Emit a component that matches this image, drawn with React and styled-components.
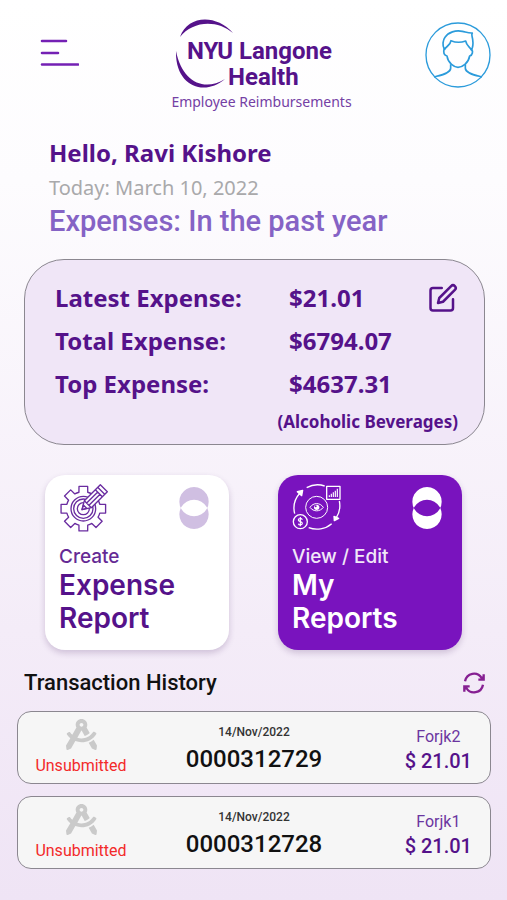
import styled, { createGlobalStyle } from "styled-components";
import { FiEdit } from "react-icons/fi";
import { FaDraftingCompass } from "react-icons/fa";

const GlobalStyle = createGlobalStyle`
  * {
    box-sizing: border-box;
  }

  body {
    margin: 0;
    font-family: "Noto Sans", "Open Sans", sans-serif;
    color: #55128a;
  }

  h1, h2, p, dl, dt, dd, ul {
    margin: 0;
    padding: 0;
    font-weight: inherit;
  }
`;

const Page = styled.div`
  min-height: 100vh;
  padding-bottom: 24px;
  background: linear-gradient(180deg, #ffffff 0%, #fdfcfe 20%, #f4ecf8 70%, #efe4f5 100%);
`;

const Header = styled.header`
  display: grid;
  grid-template-columns: 1fr auto 1fr;
  padding: 18px 16px 0 32px;
`;

const IconButton = styled.button`
  display: flex;
  border: none;
  background: none;
  padding: 0;
  color: inherit;
  cursor: pointer;
`;

const MenuButton = styled(IconButton)`
  align-self: start;
  justify-self: start;
  padding: 20px 8px;
`;

const AvatarButton = styled(IconButton)`
  align-self: start;
  justify-self: end;
  padding-top: 4px;
`;

const Brand = styled.div`
  display: flex;
  flex-direction: column;
  align-items: center;
`;

const LogoText = styled.text`
  font-family: Roboto, sans-serif;
  font-size: 24px;
  font-weight: 700;
`;

const BrandCaption = styled.p`
  font-size: 14px;
  line-height: 20px;
  color: #7440a4;
`;

const Intro = styled.section`
  padding: 24px 24px 0 49px;
`;

const Greeting = styled.h1`
  font-size: 24px;
  line-height: 34px;
  font-weight: 700;
`;

const Today = styled.p`
  margin-top: 2px;
  font-size: 20px;
  line-height: 32px;
  font-weight: 400;
  color: #a9a9ab;
`;

const Period = styled.h2`
  font-family: Roboto, sans-serif;
  font-size: 29px;
  line-height: 34px;
  font-weight: 500;
  color: #8563c5;
`;

const Summary = styled.section`
  display: flex;
  justify-content: space-between;
  align-items: flex-start;
  margin: 21px 22px 0 24px;
  padding: 16px 26px 5px 30px;
  border: 1px solid #8b8790;
  border-radius: 40px;
  background: #f0e6f7;
`;

const SummaryList = styled.dl`
  flex: 1;
  font-weight: 700;
`;

const SummaryRow = styled.div`
  display: grid;
  grid-template-columns: 234px 1fr;
  font-size: 24px;
  line-height: 43px;
`;

const SummaryNote = styled.p`
  margin-right: -30px;
  font-size: 17px;
  line-height: 34px;
  text-align: right;
`;

const EditButton = styled(IconButton)`
  padding-top: 7px;
`;

const Tiles = styled.section`
  display: grid;
  grid-template-columns: 1fr 1fr;
  gap: 49px;
  padding: 30px 45px 0;
`;

const Tile = styled.button`
  display: flex;
  flex-direction: column;
  height: 175px;
  padding: 8px 14px;
  border: none;
  border-radius: 20px;
  text-align: left;
  font-family: Inter, sans-serif;
  color: ${({ $filled }) => ($filled ? "#ffffff" : "#55128a")};
  background: ${({ $filled }) => ($filled ? "#7913be" : "#ffffff")};
  box-shadow: 0 3px 6px rgba(60, 20, 90, 0.2);
  cursor: pointer;
`;

const TileTop = styled.span`
  display: flex;
  align-items: center;
  justify-content: space-between;
  width: 100%;
  padding-right: 6px;
  margin-bottom: 12px;
`;

const TileAction = styled.span`
  font-size: 19px;
  line-height: 24px;
  font-weight: 500;
  opacity: 0.9;
`;

const TileName = styled.span`
  font-size: 28px;
  line-height: 33px;
  font-weight: 600;
`;

const HistoryHeader = styled.div`
  display: flex;
  align-items: center;
  justify-content: space-between;
  padding: 20px 22px 16px 24px;
`;

const HistoryTitle = styled.h2`
  font-family: Roboto, sans-serif;
  font-size: 22px;
  line-height: 25px;
  font-weight: 500;
  color: #111111;
`;

const HistoryList = styled.ul`
  display: flex;
  flex-direction: column;
  gap: 12px;
  padding: 0 16px 0 17px;
  list-style: none;
  font-family: Roboto, sans-serif;
`;

const Transaction = styled.li`
  display: grid;
  grid-template-columns: 126px 1fr 126px;
  align-items: center;
  height: 73px;
  padding-top: 2px;
  border: 1px solid #8b8790;
  border-radius: 14px;
  background: #f6f6f6;
`;

const Status = styled.div`
  display: flex;
  flex-direction: column;
  align-items: center;
  gap: 4px;
  font-size: 16px;
  line-height: 24px;
  color: #f32a2a;

  svg {
    color: #cacaca;
  }
`;

const Reference = styled.div`
  text-align: center;
  color: #111111;
`;

const TransactionDate = styled.p`
  font-size: 12px;
  line-height: 20px;
  font-weight: 500;
  color: #333333;
`;

const TransactionId = styled.p`
  font-size: 24px;
  line-height: 34px;
  font-weight: 500;
`;

const Charge = styled.div`
  justify-self: end;
  padding-right: 18px;
  text-align: center;
`;

const ChargeName = styled.p`
  font-size: 16px;
  line-height: 24px;
  color: #6b35a0;
`;

const ChargeAmount = styled.p`
  font-size: 20px;
  line-height: 24px;
  font-weight: 500;
`;

const MenuIcon = () => (
  <svg width="39" height="30" viewBox="0 0 39 30" fill="none" stroke="#7420b4" strokeWidth="2.6" strokeLinecap="round">
    <path d="M2 3h24M2 15h16M2 26.500h36" />
  </svg>
);

const Logo = () => (
  <svg width="175" height="74" viewBox="0 0 175 74" fill="#55128a" role="img" aria-label="NYU Langone Health">
    <path d="M6 19C14 -3 42 -4 59 15C43 1 18 3 6 19Z" />
    <path d="M2 33C1 68 30 79 51 61C30 74 8 64 2 33Z" />
    <LogoText x="13" y="41">NYU</LogoText>
    <LogoText x="65" y="41">Langone</LogoText>
    <LogoText x="54" y="67">Health</LogoText>
  </svg>
);

const AvatarIcon = () => (
  <svg width="66" height="66" viewBox="0 0 198 198" fill="none" stroke="#2b9bdb" strokeWidth="5" strokeLinejoin="round">
    <circle cx="99" cy="99" r="96" strokeWidth="4" />
    <path d="M58 82C51 70 54 54 60 46C70 30 92 24 112 28C122 30 132 34 142 33C138 38 142 44 143 52C145 66 144 76 139 84C134 74 125 72 122 57C108 62 92 62 78 56C76 72 62 72 58 84" />
    <path d="M58 80C53 92 58 100 66 102C69 124 88 136 99 136C112 136 130 124 134 102C143 99 145 88 139 80" />
    <path d="M77 127v12C77 154 45 160 27 165M121 127v12C121 154 153 160 171 165" />
  </svg>
);

// closed outline of an eight-tooth cog
const gearPath = (cx, cy, outer, inner) => {
  const at = (radius, deg) => {
    const a = (deg * Math.PI) / 180;
    return `${(cx + radius * Math.cos(a)).toFixed(1)} ${(cy + radius * Math.sin(a)).toFixed(1)}`;
  };
  let d = "";
  for (let i = 0; i < 8; i++) {
    const mid = i * 45;
    d += `${i ? "L" : "M"}${at(inner, mid - 15)}L${at(outer, mid - 11)}L${at(outer, mid + 11)}L${at(inner, mid + 15)}`;
    d += `A${inner} ${inner} 0 0 1 ${at(inner, mid + 30)}`;
  }
  return `${d}Z`;
};

const GearPencilIcon = () => (
  <svg width="50" height="50" viewBox="0 0 150 150" fill="none" stroke="#6a2ca0" strokeWidth="4" strokeLinejoin="round">
    <path d={gearPath(73, 77, 68, 51)} />
    <circle cx="73" cy="77" r="37" />
    <circle cx="73" cy="77" r="29" />
    <circle cx="73" cy="77" r="18" />
    <path d="M69 80L76 53L124 5L145 26L97 74Z" fill="#ffffff" />
    <path d="M76 53L97 74M83 60L117 26M90 67L124 33M109 20L130 41M116 13L137 34M69 80L73 66L83 76Z" />
  </svg>
);

const ReviewIcon = () => (
  <svg width="50" height="50" viewBox="0 0 150 150" fill="none" stroke="#ffffff" strokeWidth="4" strokeLinejoin="round">
    <path d="M8 92A68 68 0 0 1 24 30M44 14A68 68 0 0 1 98 9M142 54A68 68 0 0 1 133 104M119 122A68 68 0 0 1 50 134" />
    <path d="M16 26L32 22L29 38ZM126 100L140 106L127 113Z" fill="#ffffff" />
    <circle cx="74" cy="73" r="33" strokeWidth="3" />
    <path d="M54 73C64 58 84 58 94 73C84 87 64 87 54 73Z" strokeWidth="3" />
    <circle cx="74" cy="73" r="8" fill="#ffffff" stroke="none" />
    <circle cx="71" cy="70" r="3" fill="#7913be" stroke="none" />
    <path d="M104 10H144V49H104Z" />
    <path d="M112 42v-5M118 42v-10M124 42v-14M130 42v-19M136 42v-25" strokeWidth="3.500" />
    <circle cx="25" cy="116" r="21" />
    <path d="M31 110C29 105 19 105 19 111C19 117 31 115 31 121C31 127 21 127 19 122M25 102v28" strokeWidth="3.500" />
  </svg>
);

// two overlapping discs with the shared lens left out
const DiscsIcon = ({ color }) => (
  <svg width="30" height="44" viewBox="0 0 90 132" fill={color} fillRule="evenodd">
    <path d="M45 3a44 44 0 1 0 .1 0ZM45 41a44 44 0 1 0 .1 0Z" />
  </svg>
);

const RefreshIcon = () => (
  <svg width="22" height="22" viewBox="0 0 66 66" fill="none" stroke="#862092" strokeWidth="7">
    <path d="M6 28C11 2 43 -3 56 18M60 38C55 64 23 69 10 48" />
    <path d="M62 7V23H46M4 59V43H20" />
    <path d="M62 10V23H49ZM4 56V43H17Z" fill="#862092" stroke="none" />
  </svg>
);

const expenses = [
  { label: "Latest Expense:", value: "$21.01" },
  { label: "Total Expense:", value: "$6794.07" },
  { label: "Top Expense:", value: "$4637.31" },
];

const transactions = [
  { id: "0000312729", date: "14/Nov/2022", status: "Unsubmitted", name: "Forjk2", amount: "$ 21.01" },
  { id: "0000312728", date: "14/Nov/2022", status: "Unsubmitted", name: "Forjk1", amount: "$ 21.01" },
];

const TransactionItem = ({ item }) => (
  <Transaction>
    <Status>
      <FaDraftingCompass size={31} />
      {item.status}
    </Status>
    <Reference>
      <TransactionDate>{item.date}</TransactionDate>
      <TransactionId>{item.id}</TransactionId>
    </Reference>
    <Charge>
      <ChargeName>{item.name}</ChargeName>
      <ChargeAmount>{item.amount}</ChargeAmount>
    </Charge>
  </Transaction>
);

const App = () => {
  return (
    <Page>
      <GlobalStyle />
      <Header>
        <MenuButton aria-label="Menu">
          <MenuIcon />
        </MenuButton>
        <Brand>
          <Logo />
          <BrandCaption>Employee Reimbursements</BrandCaption>
        </Brand>
        <AvatarButton aria-label="Profile">
          <AvatarIcon />
        </AvatarButton>
      </Header>

      <Intro>
        <Greeting>Hello, Ravi Kishore</Greeting>
        <Today>Today: March 10, 2022</Today>
        <Period>Expenses: In the past year</Period>
      </Intro>

      <Summary>
        <SummaryList>
          {expenses.map((expense) => (
            <SummaryRow key={expense.label}>
              <dt>{expense.label}</dt>
              <dd>{expense.value}</dd>
            </SummaryRow>
          ))}
          <SummaryNote as="dd">(Alcoholic Beverages)</SummaryNote>
        </SummaryList>
        <EditButton aria-label="Edit expenses">
          <FiEdit size={30} />
        </EditButton>
      </Summary>

      <Tiles>
        <Tile>
          <TileTop>
            <GearPencilIcon />
            <DiscsIcon color="#d0bfe2" />
          </TileTop>
          <TileAction>Create</TileAction>
          <TileName>
            Expense
            <br />
            Report
          </TileName>
        </Tile>
        <Tile $filled>
          <TileTop>
            <ReviewIcon />
            <DiscsIcon color="#ffffff" />
          </TileTop>
          <TileAction>View / Edit</TileAction>
          <TileName>
            My
            <br />
            Reports
          </TileName>
        </Tile>
      </Tiles>

      <HistoryHeader>
        <HistoryTitle>Transaction History</HistoryTitle>
        <IconButton aria-label="Refresh">
          <RefreshIcon />
        </IconButton>
      </HistoryHeader>
      <HistoryList>
        {transactions.map((item) => (
          <TransactionItem key={item.id} item={item} />
        ))}
      </HistoryList>
    </Page>
  );
};

export default App;
